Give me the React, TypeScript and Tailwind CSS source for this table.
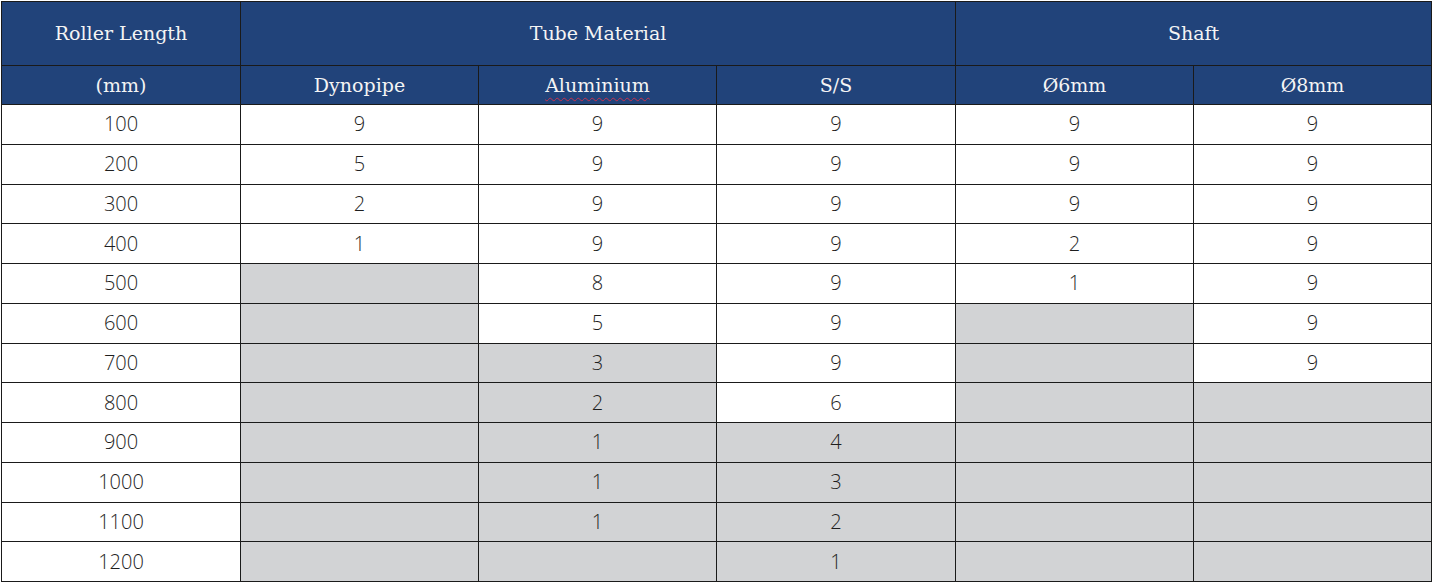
const rows: { len: string; cells: [string, boolean][] }[] = [
  { len: '100', cells: [['9', false], ['9', false], ['9', false], ['9', false], ['9', false]] },
  { len: '200', cells: [['5', false], ['9', false], ['9', false], ['9', false], ['9', false]] },
  { len: '300', cells: [['2', false], ['9', false], ['9', false], ['9', false], ['9', false]] },
  { len: '400', cells: [['1', false], ['9', false], ['9', false], ['2', false], ['9', false]] },
  { len: '500', cells: [['', true], ['8', false], ['9', false], ['1', false], ['9', false]] },
  { len: '600', cells: [['', true], ['5', false], ['9', false], ['', true], ['9', false]] },
  { len: '700', cells: [['', true], ['3', true], ['9', false], ['', true], ['9', false]] },
  { len: '800', cells: [['', true], ['2', true], ['6', false], ['', true], ['', true]] },
  { len: '900', cells: [['', true], ['1', true], ['4', true], ['', true], ['', true]] },
  { len: '1000', cells: [['', true], ['1', true], ['3', true], ['', true], ['', true]] },
  { len: '1100', cells: [['', true], ['1', true], ['2', true], ['', true], ['', true]] },
  { len: '1200', cells: [['', true], ['', true], ['1', true], ['', true], ['', true]] },
];

const head = "font-['DejaVu_Serif',serif] text-[19px] font-normal text-[#f4f4f4] border border-[#1a1a1a] text-center";
const cell = "font-['Open_Sans',sans-serif] font-light text-[20px] text-[#1e1e1e] border border-[#1a1a1a] text-center p-0";

export default function App() {
  return (
    <div className="w-[1434px] h-[584px] bg-white">
      <table className="w-[1431px] border-collapse table-fixed ml-px mt-px">
        <colgroup>
          <col className="w-[239px]" />
          <col className="w-[238px]" />
          <col className="w-[238px]" />
          <col className="w-[239px]" />
          <col className="w-[238px]" />
          <col className="w-[238px]" />
        </colgroup>
        <thead className="bg-[#21437a]">
          <tr className="h-[64px]">
            <th className={head}>Roller Length</th>
            <th className={head} colSpan={3}>Tube Material</th>
            <th className={head} colSpan={2}>Shaft</th>
          </tr>
          <tr className="h-[39px]">
            <th className={head}>(mm)</th>
            <th className={head}>Dynopipe</th>
            <th className={head}>
              <span className="underline decoration-wavy decoration-[#c8324e] decoration-1 underline-offset-[5px]">Aluminium</span>
            </th>
            <th className={head}>S/S</th>
            <th className={head}>Ø6mm</th>
            <th className={head}>Ø8mm</th>
          </tr>
        </thead>
        <tbody>
          {rows.map((r) => (
            <tr key={r.len} className="h-[39.75px]">
              <td className={`${cell} bg-white`}>{r.len}</td>
              {r.cells.map(([v, grey], i) => (
                <td key={i} className={`${cell} ${grey ? 'bg-[#d2d3d5]' : 'bg-white'}`}>{v}</td>
              ))}
            </tr>
          ))}
        </tbody>
      </table>
    </div>
  );
}
